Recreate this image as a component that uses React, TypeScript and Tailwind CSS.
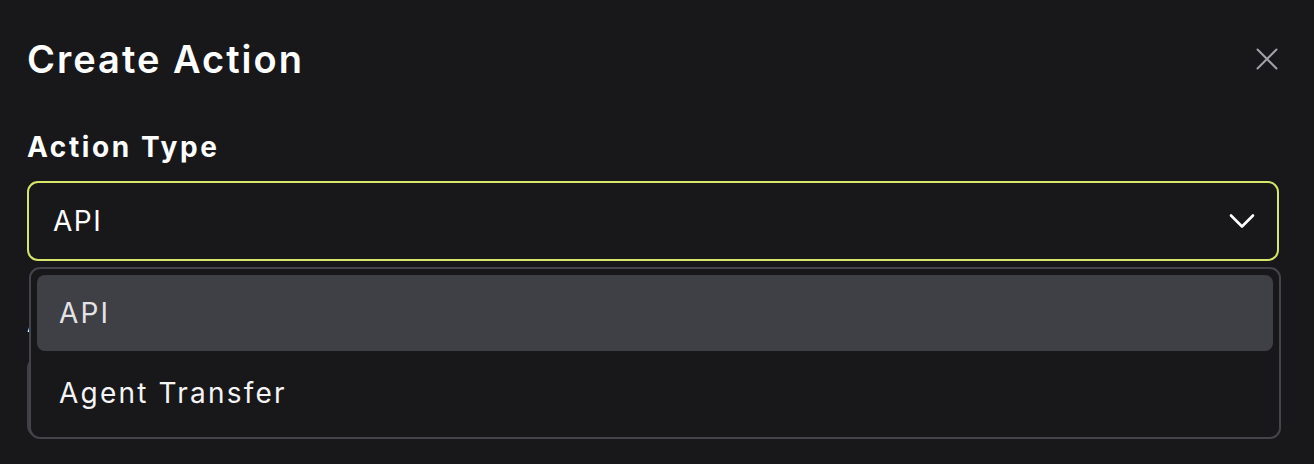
import React, { useState } from 'react';

const options = ['API', 'Agent Transfer'];

function CloseIcon() {
  return (
    <svg width="22" height="22" viewBox="0 0 22 22" fill="none" stroke="#a1a1aa" strokeWidth="2" strokeLinecap="round">
      <path d="M1.5 1.5 20.5 20.5M20.5 1.5 1.5 20.5" />
    </svg>
  );
}

function Chevron() {
  return (
    <svg width="26" height="16" viewBox="0 0 26 16" fill="none" stroke="#ffffff" strokeWidth="2.6" strokeLinecap="round" strokeLinejoin="round">
      <path d="M2 2.5 13 13.5 24 2.5" />
    </svg>
  );
}

export default function App() {
  const [value, setValue] = useState('API');
  const [open, setOpen] = useState(true);

  return (
    <div
      className="min-h-screen bg-[#18181b] text-white pl-[27px] pr-[34px] pt-[37px]"
      style={{ fontFamily: 'Inter, "Noto Sans", sans-serif' }}
    >
      {/* Header */}
      <div className="flex items-center justify-between">
        <h1 className="text-[38px] leading-[44px] font-semibold tracking-[2px]">Create Action</h1>
        <button className="mr-[2px]">
          <CloseIcon />
        </button>
      </div>

      {/* Action Type */}
      <div className="mt-[49px]">
        <label className="block text-[28px] leading-[34px] font-bold tracking-[2.6px]">Action Type</label>
        <div className="relative mt-[17px] mr-[1px]">
          <button
            onClick={() => setOpen(!open)}
            className="w-full h-[80px] flex items-center justify-between rounded-[11px] border-2 border-[#d6e66a] pl-[24px] pr-[22px] text-[28px] text-white"
          >
            <span className="tracking-[1.5px]">{value}</span>
            <Chevron />
          </button>

          {open && (
            <div className="absolute left-[2px] right-[-2px] top-[86px] z-10 rounded-[11px] border-2 border-[#44444b] bg-[#18181b] p-[6px] flex flex-col gap-[4px]">
              {options.map((opt) => (
                <div
                  key={opt}
                  onClick={() => {
                    setValue(opt);
                    setOpen(false);
                  }}
                  className={
                    opt === value
                      ? 'h-[76px] flex items-center rounded-[8px] bg-[#3f3f46] pl-[22px] text-[28px] text-[#e4e4e7] tracking-[2.2px]'
                      : 'h-[76px] flex items-center rounded-[8px] pl-[22px] text-[28px] text-[#f4f4f5] tracking-[2.2px]'
                  }
                >
                  {opt}
                </div>
              ))}
            </div>
          )}
        </div>
      </div>

      {/* Underlying field, mostly covered by the open menu */}
      <div className="mt-[44px]">
        <label className="block text-[28px] leading-[34px] font-bold">API Endpoint</label>
        <div className="mt-[18px] h-[80px] rounded-[11px] border-2 border-[#3f3f46]" />
      </div>
    </div>
  );
}
